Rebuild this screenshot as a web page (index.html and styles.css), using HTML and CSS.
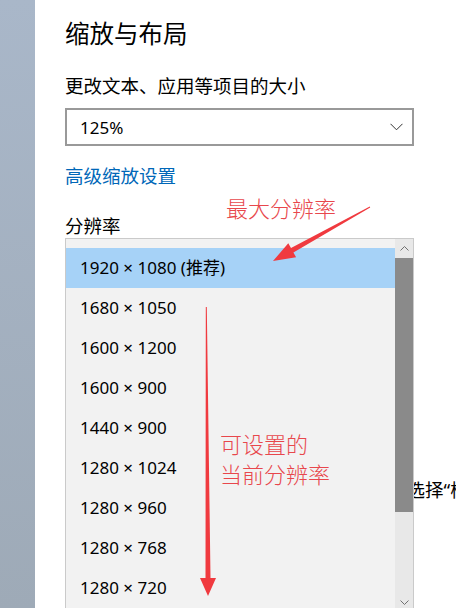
FILE: index.html
```html
<!DOCTYPE html>
<html lang="zh-CN">
<head>
<meta charset="utf-8">
<title>缩放与布局</title>
<link rel="stylesheet" href="styles.css">
</head>
<body>
<div class="window">
  <aside class="sidebar"></aside>
  <main class="content">
    <h1 class="title">缩放与布局</h1>
    <p class="label">更改文本、应用等项目的大小</p>
    <div class="combo">
      <span>125%</span>
      <svg class="chev" width="13" height="8" viewBox="0 0 13 8"><polyline points="0.5,0.8 6.5,6.8 12.5,0.8" fill="none" stroke="#333" stroke-width="1"/></svg>
    </div>
    <a class="link">高级缩放设置</a>
    <p class="label res-label">分辨率</p>
    <div class="res-field">
      <div class="popup">
        <ul class="items">
          <li class="selected">1920 × 1080 (推荐)</li>
          <li>1680 × 1050</li>
          <li>1600 × 1200</li>
          <li>1600 × 900</li>
          <li>1440 × 900</li>
          <li>1280 × 1024</li>
          <li>1280 × 960</li>
          <li>1280 × 768</li>
          <li>1280 × 720</li>
        </ul>
        <div class="scrollbar">
          <div class="sb-btn sb-up"><svg width="9" height="5" viewBox="0 0 9 5"><polyline points="0.5,4.5 4.5,0.5 8.5,4.5" fill="none" stroke="#707070" stroke-width="1"/></svg></div>
          <div class="thumb"></div>
          <div class="track"></div>
          <div class="sb-btn sb-down"><svg width="9" height="5" viewBox="0 0 9 5"><polyline points="0.5,0.5 4.5,4.5 8.5,0.5" fill="none" stroke="#707070" stroke-width="1"/></svg></div>
        </div>
      </div>
    </div>
    <p class="behind">较旧的显示器可能不会总是自动连接。选择“检测”即可尝试连接到它们。</p>
  </main>
  <svg class="arrows" width="456" height="608" viewBox="0 0 456 608">
    <polygon points="369.8,206.6 291,248.1 288.3,243.3 273,261 296.1,257.3 293.4,252.5 370.2,207.4" fill="#f03a3f"/>
    <polygon points="205.8,307 206.8,307 210.5,578 216,578 208,596 200,578 205.5,578" fill="#f03a3f"/>
  </svg>
  <div class="note note-max">最大分辨率</div>
  <div class="note note-list">可设置的<br>当前分辨率</div>
</div>
</body>
</html>
```
FILE: styles.css
```css
html, body {
  margin: 0;
  padding: 0;
}

body {
  width: 456px;
  height: 608px;
  overflow: hidden;
  background: #ffffff;
  font-family: "Noto Sans", "Noto Sans CJK SC", sans-serif;
  color: #000000;
}

.window {
  position: relative;
  display: flex;
  width: 456px;
  height: 608px;
  overflow: hidden;
}

.sidebar {
  flex: none;
  width: 35px;
  background: linear-gradient(#a9b7c9, #9eaab7);
}

.content {
  flex: 1;
  min-width: 0;
  padding-left: 30px;
}

.title {
  margin: 18px 0 0;
  font-size: 24.5px;
  line-height: 32px;
  font-weight: 400;
}

.label {
  margin: 24px 0 0;
  font-size: 18.5px;
  line-height: 24px;
}

.combo {
  margin-top: 10px;
  width: 349px;
  height: 38px;
  box-sizing: border-box;
  border: 2px solid #999999;
  display: flex;
  align-items: center;
  justify-content: space-between;
  padding: 0 9px 0 13px;
  font-size: 17px;
}

.chev {
  display: block;
}

.link {
  display: block;
  margin-top: 18px;
  font-size: 18.5px;
  line-height: 24px;
  color: #0067b8;
}

.res-label {
  margin-top: 26px;
}

.res-field {
  position: relative;
  height: 0;
}

.popup {
  position: absolute;
  left: 0;
  top: 0;
  z-index: 1;
  width: 349px;
  height: 375px;
  box-sizing: border-box;
  border: 1px solid #cacaca;
  background: #f2f2f2;
  display: flex;
}

.items {
  list-style: none;
  margin: 0;
  padding: 9px 0 0;
  flex: 1;
}

.items li {
  height: 40px;
  line-height: 40px;
  padding-left: 14px;
  font-size: 17px;
  white-space: nowrap;
}

.items li.selected {
  background: #a6d2f7;
}

.scrollbar {
  flex: none;
  width: 18px;
  display: flex;
  flex-direction: column;
  background: #e8e8e8;
}

.sb-btn {
  display: flex;
  align-items: center;
  justify-content: center;
}

.sb-btn svg {
  display: block;
}

.sb-up {
  height: 19px;
}

.sb-down {
  height: 20px;
}

.thumb {
  height: 254px;
  background: #8a8a8a;
}

.track {
  flex: 1;
}

.behind {
  margin: 240px 0 0;
  font-size: 18.5px;
  line-height: 24px;
  white-space: nowrap;
  text-indent: 27px;
}

.arrows {
  position: absolute;
  left: 0;
  top: 0;
  z-index: 2;
  pointer-events: none;
}

.note {
  position: absolute;
  z-index: 3;
  color: #e8474c;
  font-family: "Noto Sans CJK SC", sans-serif;
  font-weight: 300;
  font-size: 22px;
  line-height: 30px;
  white-space: nowrap;
}

.note-max {
  left: 226px;
  top: 192px;
}

.note-list {
  left: 220px;
  top: 428px;
}
```
